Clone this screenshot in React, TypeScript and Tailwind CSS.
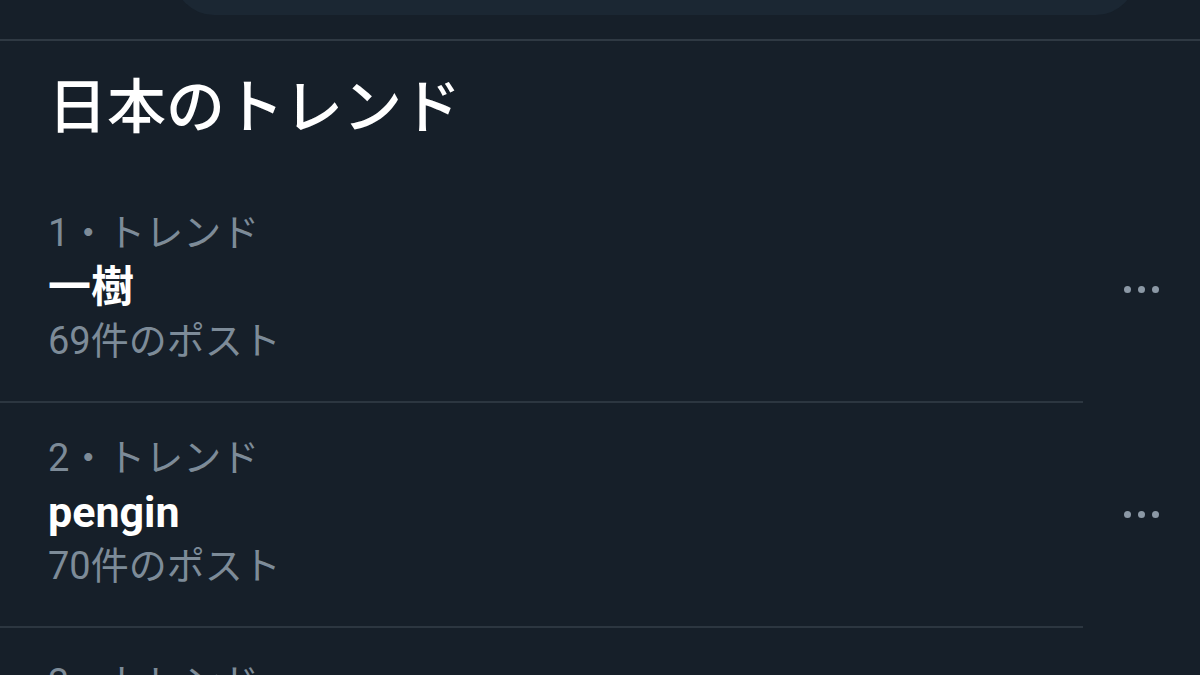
const trends = [
  { rank: 1, name: "一樹", posts: "69件のポスト" },
  { rank: 2, name: "pengin", posts: "70件のポスト" },
  { rank: 3, name: "", posts: "" },
];

function MoreDots() {
  return (
    <div className="flex items-center gap-[7px] pr-[41px]">
      <span className="h-[7px] w-[7px] rounded-full bg-[#8b98a5]" />
      <span className="h-[7px] w-[7px] rounded-full bg-[#8b98a5]" />
      <span className="h-[7px] w-[7px] rounded-full bg-[#8b98a5]" />
    </div>
  );
}

function TrendRow({ rank, name, posts }: { rank: number; name: string; posts: string }) {
  return (
    <div>
      <div className="flex items-center justify-between">
        <div className="pl-12 pt-[28px] pb-[33px]">
          <div className="text-[38px] leading-[54px] text-[#7d8b98]">{rank}・トレンド</div>
          <div className="text-[43px] font-bold leading-[54px] text-white">{name}</div>
          <div className="text-[38px] leading-[54px] text-[#7d8b98]">{posts}</div>
        </div>
        <MoreDots />
      </div>
      <div className="mr-[117px] h-[2px] bg-[#2c3640]" />
    </div>
  );
}

export default function App() {
  return (
    <div
      className="h-[675px] w-[1200px] overflow-hidden bg-[#161f29]"
      style={{ fontFamily: '"Roboto", "Noto Sans CJK JP", sans-serif' }}
    >
      <div className="h-[39px] overflow-hidden pl-[174px] pr-[64px]">
        <div className="-mt-[65px] h-[80px] rounded-full bg-[#1b2733]" />
      </div>
      <div className="h-[2px] bg-[#2f3943]" />
      <h1 className="pl-12 pt-[32px] pb-[35px] text-[59px] font-medium leading-[70px] text-white">
        日本のトレンド
      </h1>
      {trends.map((t) => (
        <TrendRow key={t.rank} {...t} />
      ))}
    </div>
  );
}
